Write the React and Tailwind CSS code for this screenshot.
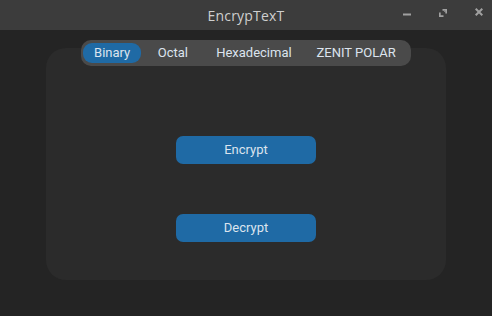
import React from "react";

export default function App() {
  return (
    <div className="w-[492px] h-[316px] bg-[#242424] flex flex-col overflow-hidden">
      <div className="h-[30px] bg-[#3c3c3c] relative flex items-center justify-center shrink-0">
        <span className="text-[14px] text-[#cfcfcf] font-['Open_Sans',sans-serif] tracking-[0.2px]">EncrypTexT</span>
        <svg width="8" height="3" viewBox="0 0 8 3" className="absolute left-[403px] top-[13px]">
          <rect x="0" y="0.5" width="8" height="2" fill="#a0a0a0" />
        </svg>
        <svg width="8" height="8" viewBox="0 0 8 8" className="absolute left-[439px] top-[9px]">
          <path d="M3.5 0H8V4.5H6.3V1.7H3.5Z M0 3.5H1.7V6.3H4.5V8H0Z" fill="#a0a0a0" />
          <path d="M5 1.7L6.3 3" stroke="#a0a0a0" strokeWidth="1" />
        </svg>
        <svg width="8" height="8" viewBox="0 0 8 8" className="absolute left-[475px] top-[8px]">
          <path d="M0.7 0.7L7.3 7.3M7.3 0.7L0.7 7.3" stroke="#a0a0a0" strokeWidth="2" />
        </svg>
      </div>
      <div className="relative flex-1">
        <div className="absolute left-[46px] top-[18px] w-[400px] h-[232px] bg-[#2b2b2b] rounded-[20px] flex flex-col items-center">
          <div className="mt-[88px] w-[140px] h-[28px] rounded-[7px] bg-[#1f6aa5] flex items-center justify-center text-[13px] text-[#dce4ee] font-['Roboto',sans-serif]">Encrypt</div>
          <div className="mt-[50px] w-[140px] h-[28px] rounded-[7px] bg-[#1f6aa5] flex items-center justify-center text-[13px] text-[#dce4ee] font-['Roboto',sans-serif]">Decrypt</div>
        </div>
        <div className="absolute left-[81px] top-[10px] w-[330px] h-[26px] bg-[#4a4a4a] rounded-[10px] flex items-center px-[2px] font-['Roboto',sans-serif] text-[13px] text-[#dce4ee]">
          <div className="w-[59px] h-[20px] rounded-[9px] bg-[#1f6aa5] flex items-center justify-center">Binary</div>
          <div className="w-[64px] flex justify-center">Octal</div>
          <div className="w-[100px] flex justify-center">Hexadecimal</div>
          <div className="w-[107px] flex justify-center">ZENIT POLAR</div>
        </div>
      </div>
    </div>
  );
}
